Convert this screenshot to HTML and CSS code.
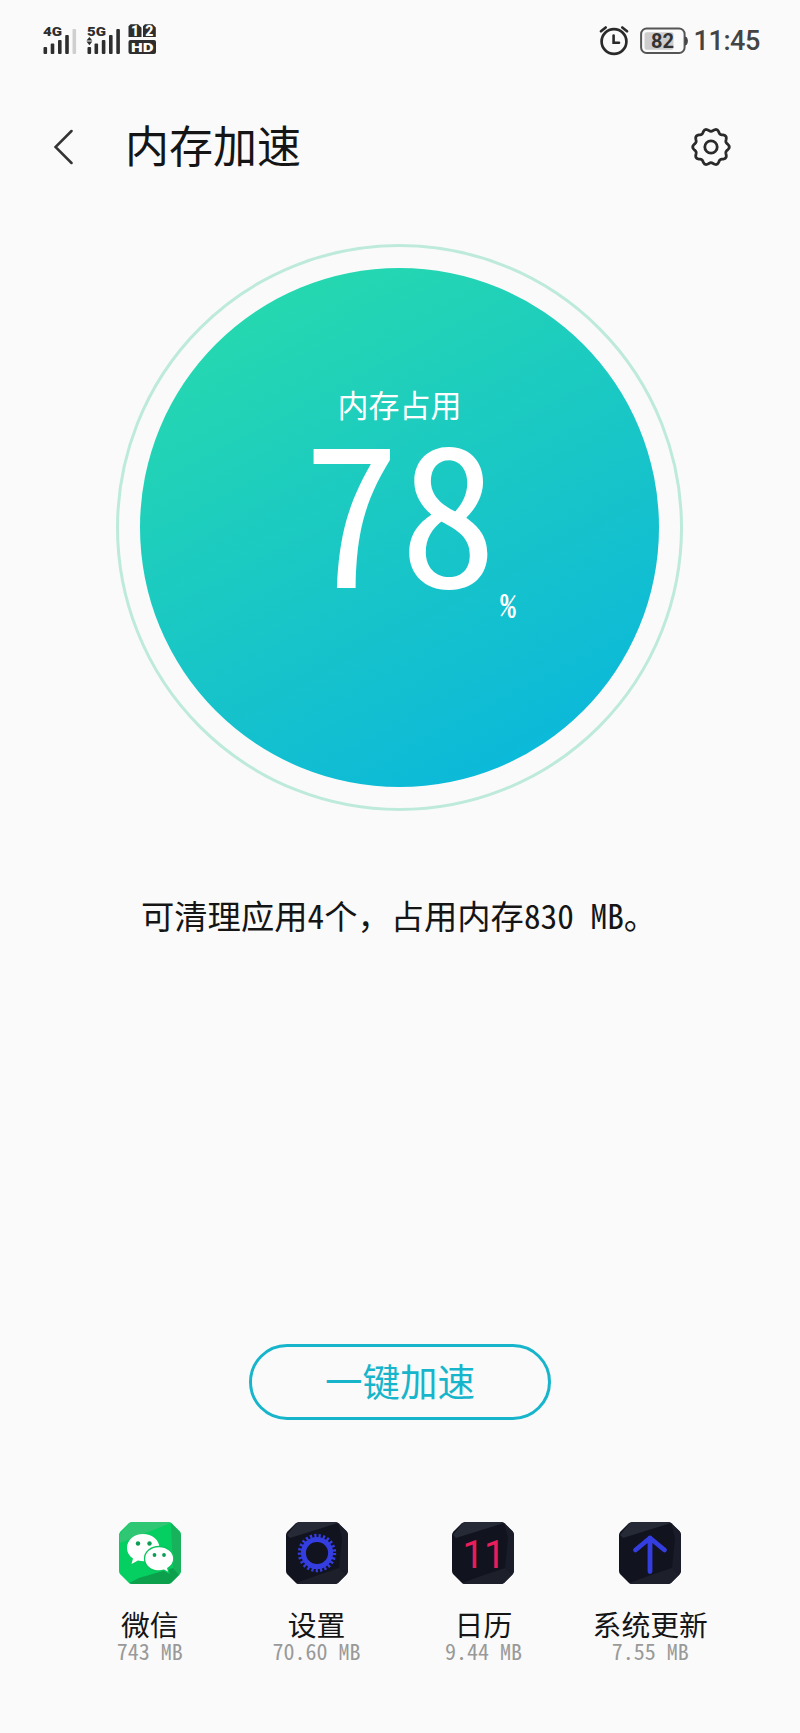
FILE: index.html
```html
<!DOCTYPE html>
<html lang="zh-CN">
  <head>
    <meta charset="UTF-8" />
    <meta name="viewport" content="width=device-width, initial-scale=1.0" />
    <title>内存加速</title>
    <link rel="stylesheet" href="styles.css">
  </head>
  <body>
    <main>
      <div class="status">
        <svg class="signal" width="120" height="36" viewBox="0 0 120 36">
          <g fill="#2e2e2e">
            <text x="0" y="13" font-size="13.5" textLength="19" lengthAdjust="spacingAndGlyphs">4G</text>
            <rect x="0.5" y="24" width="3.6" height="7" rx="1" />
            <rect x="7.7" y="20.5" width="3.6" height="10.5" rx="1" />
            <rect x="15" y="17" width="3.6" height="14" rx="1" />
            <rect x="22.2" y="12" width="3.6" height="19" rx="1" />
            <rect x="29.5" y="6" width="3.6" height="25" rx="1" fill="#cfcfcf" />
            <text x="44" y="13" font-size="13.5" textLength="19" lengthAdjust="spacingAndGlyphs">5G</text>
            <path d="M43.5 17.6l2.9-3.6 2.9 3.6zM43.5 18.6l2.9 3.6 2.9-3.6z" />
            <rect x="44.5" y="24" width="3.6" height="7" rx="1" />
            <rect x="51.5" y="20.5" width="3.6" height="10.5" rx="1" />
            <rect x="58.8" y="17" width="3.6" height="14" rx="1" />
            <rect x="66" y="12" width="3.6" height="19" rx="1" />
            <rect x="73.3" y="6" width="3.6" height="25" rx="1" />
            <path d="M87.5 1.2H95l3.5 3.5v9.300H85.500V3.200zM102 1.200h7.500l3.300 3.300v9.500H100V3.200z" />
            <rect x="85.5" y="17" width="27.5" height="14" rx="2" />
          </g>
          <g fill="#fff">
            <text x="88" y="12.6" font-size="14">1</text>
            <text x="102.2" y="12.6" font-size="14">2</text>
            <text x="88" y="29" font-size="13.5" textLength="22.5" lengthAdjust="spacingAndGlyphs">HD</text>
          </g>
        </svg>
        <div class="status-right">
          <svg width="30" height="30" viewBox="0 0 30 30" fill="none" stroke="#2a2a2a" stroke-linecap="round">
            <circle cx="15" cy="15.5" r="12.4" stroke-width="2.7" />
            <path d="M14.6 9.5v7.300h5.400" stroke-width="2.6" />
            <path d="M2 5.3l4.700-3.800M28 5.300l-4.700-3.800" stroke-width="2.6" />
          </svg>
          <svg class="battery" width="48" height="28" viewBox="0 0 48 28">
            <rect x="1.1" y="1.5" width="43.5" height="24.5" rx="5.5" fill="#fafafa" stroke="#555" stroke-width="2" />
            <rect x="4.5" y="5.3" width="29" height="17.5" rx="2" fill="#cdcdcd" />
            <path d="M45.5 10c2.400 0 2.400 8 0 8z" fill="#444" stroke="#444" />
            <text x="22.5" y="21" font-size="20" text-anchor="middle" fill="#333">82</text>
          </svg>
          <span class="time">11:45</span>
        </div>
      </div>

      <div class="header">
        <svg width="20" height="36" viewBox="0 0 20 36" fill="none" stroke="#333" stroke-width="2.5" stroke-linecap="round">
          <path d="M17.5 2L1.500 18l16 16" />
        </svg>
        <h2 class="title">内存加速</h2>
        <svg class="gear" width="42" height="42" viewBox="-21 -21 42 42" fill="none" stroke="#2a2a2a" stroke-width="2.8" stroke-linejoin="round">
          <circle r="6.2" />
          <path id="gear" />
        </svg>
      </div>

      <div class="ring">
        <div class="circle">
          <span class="circle-label">内存占用</span>
          <div class="percent">
            <span class="num">78</span>
            <span class="unit">%</span>
          </div>
        </div>
      </div>

      <p class="summary"><span>可清理应用4个</span><span class="comma">，</span><span>占用内存830 MB。</span></p>

      <button class="btn">一键加速</button>

      <div class="apps">
        <div class="app">
          <svg class="icon" viewBox="0 0 62 62">
            <path d="M13 0h36q2 0 3.500 1.300l8 7.700q1.500 1.500 1.500 4v36q0 2-1.500 3.500l-8 8Q51 62 49 62H13q-2 0-3.500-1.500l-8-8Q0 51 0 49V13q0-2 1.500-3.500l8-8Q11 0 13 0z" fill="#04cf60" />
            <path d="M0 13l10-11.500Q11 0 13 0h36l3 1L1 21z" fill="#2fc773" />
            <path d="M52 1l9 9 1 3v36l-2 4-6-7z" fill="#18b25c" />
            <path d="M54 46l6 7-8 8-3 1H13l-3-1 10-5z" fill="#0c9f4c" />
            <path d="M24 12C15 12 8 18 8 26c0 4.500 2.300 8 6 10.500L12.500 42l6.500-3.500c2 .5 4 .7 6 .7 9 0 15.500-6 15.500-13.200C40.500 18 33 12 24 12z" fill="#fff" />
            <path d="M40 24.500c-8.200 0-14.500 5.400-14.500 12.200S31.800 49 40 49c1.700 0 3.500-.3 5-.8l5 2.800-1.200-4.800c3.700-2.200 6-5.700 6-9.500 0-6.800-6.600-12.200-14.800-12.200z" fill="#fff" stroke="#0cc35e" stroke-width="1.3" />
            <g fill="#0a9f55">
              <circle cx="19" cy="21.5" r="2.2" />
              <circle cx="30.5" cy="21.5" r="2.2" />
              <circle cx="35.5" cy="33" r="1.9" />
              <circle cx="45" cy="33" r="1.9" />
            </g>
          </svg>
          <span class="name">微信</span>
          <span class="size">743 MB</span>
        </div>
        <div class="app">
          <svg class="icon" viewBox="0 0 62 62">
            <use href="#tile" />
            <circle cx="31" cy="31" r="13.6" fill="none" stroke="#343de0" stroke-width="5" />
            <circle cx="31" cy="31" r="17.2" fill="none" stroke="#343de0" stroke-width="4" stroke-dasharray="2.2 2.122" />
          </svg>
          <span class="name">设置</span>
          <span class="size">70.60 MB</span>
        </div>
        <div class="app">
          <svg class="icon" viewBox="0 0 62 62">
            <use href="#tile" />
            <text class="day" x="10.5" y="46">1</text>
            <text class="day" x="32" y="46">1</text>
          </svg>
          <span class="name">日历</span>
          <span class="size">9.44 MB</span>
        </div>
        <div class="app">
          <svg class="icon" viewBox="0 0 62 62">
            <defs>
              <g id="tile">
                <path d="M13 0h36q2 0 3.500 1.300l8 7.700q1.500 1.500 1.500 4v36q0 2-1.500 3.500l-8 8Q51 62 49 62H13q-2 0-3.500-1.500l-8-8Q0 51 0 49V13q0-2 1.500-3.500l8-8Q11 0 13 0z" fill="#11131f" />
                <path d="M1 13l9-11 3-2h36l3 1-48 15z" fill="#262936" />
                <path d="M52 1l9 9 1 3v36l-2 4-7-7 3-30z" fill="#1a1c29" />
                <path d="M53 46l7 7-8 8-3 1H13l-3-1 22-8z" fill="#1d1f2b" />
              </g>
            </defs>
            <use href="#tile" />
            <path d="M31 49.5V16M16.500 28L31 16l14.500 12" fill="none" stroke="#343de0" stroke-width="4.8" stroke-linecap="round" stroke-linejoin="round" />
          </svg>
          <span class="name">系统更新</span>
          <span class="size">7.55 MB</span>
        </div>
      </div>
    </main>
    <script>
      // 齿轮轮廓
      const teeth = 10
      let d = ''
      for (let i = 0; i < 360; i += 3) {
        const a = (i * Math.PI) / 180
        const r = 17 - 1.3 * Math.cos(teeth * a)
        d += (i ? 'L' : 'M') + (r * Math.sin(a)).toFixed(2) + ' ' + (-r * Math.cos(a)).toFixed(2)
      }
      document.getElementById('gear').setAttribute('d', d + 'Z')
    </script>
  </body>
</html>
```
FILE: styles.css
```css
body {
  margin: 0;
  background-color: #fafafa;
  font-family: "Noto Sans CJK SC", sans-serif;
  color: #151515;
}
main {
  box-sizing: border-box;
  width: 800px;
  height: 1733px;
  margin: 0 auto;
  overflow: hidden;
}
svg {
  display: block;
}
.status {
  display: flex;
  justify-content: space-between;
  height: 82px;
  box-sizing: border-box;
  padding: 23px 40px 0 43px;
}
.status text {
  font-family: Roboto, sans-serif;
  font-weight: 900;
}
.status .battery text {
  font-weight: 700;
}
.status-right {
  display: flex;
  align-items: center;
  height: 36px;
}
.battery {
  margin-left: 11px;
}
.time {
  margin-left: 5px;
  font-family: Roboto, sans-serif;
  font-size: 27px;
  font-weight: 500;
  line-height: 36px;
  letter-spacing: -0.4px;
  color: #444;
}
.header {
  display: flex;
  align-items: center;
  height: 130px;
  padding: 0 68px 0 54px;
}
.title {
  flex: 1;
  margin: -6px 0 0 51px;
  font-size: 44px;
  font-weight: 400;
  line-height: 60px;
}
.ring {
  box-sizing: border-box;
  width: 567px;
  height: 567px;
  margin: 32px 0 0 116px;
  padding: 21px;
  border: 3px solid #bdeadb;
  border-radius: 50%;
}
.circle {
  box-sizing: border-box;
  width: 519px;
  height: 519px;
  padding-top: 114px;
  border-radius: 50%;
  background: linear-gradient(152deg, #26d9ae 10%, #18c5c8 55%, #08b6de 96%);
  color: #fff;
  text-align: center;
}
.circle-label {
  display: block;
  font-size: 31px;
  line-height: 44px;
}
.percent {
  display: flex;
  align-items: flex-start;
  justify-content: center;
  height: 194px;
  padding-left: 20px;
}
.num {
  font-size: 194px;
  line-height: 155px;
  font-feature-settings: "hwid";
}
.unit {
  align-self: flex-end;
  margin-left: 3px;
  font-size: 32px;
  font-weight: 500;
  line-height: 32px;
  font-feature-settings: "hwid";
}
.summary {
  margin: 80px 0 0 141px;
  font-size: 33.3px;
  line-height: 48px;
  white-space: nowrap;
  font-feature-settings: "hwid";
}
.comma {
  font-feature-settings: normal;
}
.btn {
  display: block;
  box-sizing: border-box;
  width: 302px;
  height: 76px;
  margin: 405px auto 0;
  padding: 0 0 4px;
  border: 3px solid #17b5cb;
  border-radius: 38px;
  background: none;
  font-family: inherit;
  font-size: 37.5px;
  line-height: 66px;
  color: #17b5cb;
  cursor: pointer;
}
.apps {
  display: grid;
  grid-template-columns: repeat(4, 166.8px);
  justify-content: center;
  margin-top: 102px;
}
.app {
  display: flex;
  flex-direction: column;
  align-items: center;
}
.icon {
  width: 62px;
  height: 62px;
}
.day {
  font-family: Roboto, sans-serif;
  font-size: 38px;
  fill: #e91e5a;
}
.name {
  margin-top: 23px;
  font-size: 28.8px;
  line-height: 34px;
}
.size {
  font-size: 22px;
  line-height: 19px;
  color: #999;
  font-feature-settings: "hwid";
}
```
